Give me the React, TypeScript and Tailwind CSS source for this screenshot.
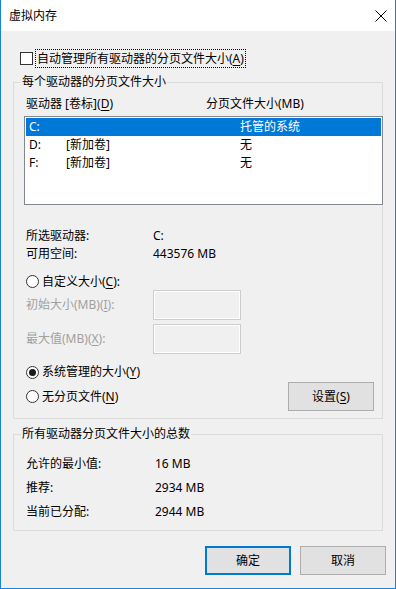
import type { ReactNode } from "react";

function Key({ k }: { k: string }) {
  return <span className="underline underline-offset-[2px]">{k}</span>;
}

function Radio({ checked }: { checked?: boolean }) {
  return (
    <span className="flex h-[13px] w-[13px] shrink-0 items-center justify-center rounded-full border border-[#333333] bg-white">
      {checked && <span className="h-[7px] w-[7px] rounded-full bg-[#1a1a1a]" />}
    </span>
  );
}

function Group({ title, className = "", children }: { title: string; className?: string; children: ReactNode }) {
  return (
    <div className={`relative mx-[12px] border border-[#dcdcdc] ${className}`}>
      <span className="absolute left-[7px] top-[-10px] bg-[#f0f0f0] px-[1px] leading-[18px]">{title}</span>
      {children}
    </div>
  );
}

function Button({ children, primary }: { children: ReactNode; primary?: boolean }) {
  return (
    <div
      className={`flex h-[29px] w-[86px] items-center justify-center bg-[#e1e1e1] ${
        primary ? "border-2 border-[#0078d7]" : "border border-[#adadad]"
      }`}
    >
      {children}
    </div>
  );
}

const drives = [
  { d: "C:", label: "", size: "托管的系统", selected: true },
  { d: "D:", label: "[新加卷]", size: "无" },
  { d: "F:", label: "[新加卷]", size: "无" },
];

export default function App() {
  return (
    <div className="flex h-[589px] w-[396px] flex-col border-x border-b border-[#1883d7] bg-[#f0f0f0] font-['Noto_Sans','Noto_Sans_CJK_SC',sans-serif] text-[12px] text-black">
      {/* title bar */}
      <div className="flex h-[31px] shrink-0 items-center justify-between bg-white pl-[8px] pr-[8px]">
        <span className="leading-[31px]">虚拟内存</span>
        <svg width="12" height="12" viewBox="0 0 12 12" className="text-black">
          <path d="M0.5 0.5 L11.5 11.5 M11.5 0.5 L0.5 11.5" stroke="currentColor" strokeWidth="1" />
        </svg>
      </div>

      <div className="flex flex-1 flex-col">
        <div className="ml-[19px] mt-[18px] flex h-[19px] items-center">
          <span className="h-[13px] w-[13px] border border-[#333333] bg-white" />
          <span className="ml-[2px] h-[19px] border border-dotted border-black px-[1px] leading-[17px]">
            自动管理所有驱动器的分页文件大小(<Key k="A" />)
          </span>
        </div>

        <Group title="每个驱动器的分页文件大小" className="mt-[14px] pb-[6px]">
          <div className="mt-[12px] flex h-[18px] pl-[12px] leading-[18px]">
            <span className="w-[180px]">
              驱动器 [卷标](<Key k="D" />)
            </span>
            <span>分页文件大小(MB)</span>
          </div>

          <div className="ml-[10px] mt-[3px] h-[89px] w-[359px] border border-[#828790] bg-white p-[1px]">
            {drives.map((r) => (
              <div
                key={r.d}
                className={`flex h-[18px] pl-[3px] leading-[18px] ${r.selected ? "bg-[#0078d7] text-white" : ""}`}
              >
                <span className="w-[37px]">{r.d}</span>
                <span className="w-[174px]">{r.label}</span>
                <span>{r.size}</span>
              </div>
            ))}
          </div>

          <div className="mt-[22px] flex h-[18px] pl-[12px] leading-[18px]">
            <span className="w-[127px]">所选驱动器:</span>
            <span>C:</span>
          </div>
          <div className="flex h-[18px] pl-[12px] leading-[18px]">
            <span className="w-[127px]">可用空间:</span>
            <span>443576 MB</span>
          </div>

          <div className="mt-[10px] flex h-[17px] items-center gap-[3px] pl-[12px]">
            <Radio />
            <span className="leading-[17px]">
              自定义大小(<Key k="C" />):
            </span>
          </div>

          <div className="flex h-[30px] items-center pl-[12px]">
            <span className="w-[127px] text-[#a0a0a0]">
              初始大小(MB)(<Key k="I" />):
            </span>
            <div className="h-[30px] w-[88px] border border-[#cccccc] bg-[#f0f0f0] shadow-[inset_0_0_0_1px_#ffffff]" />
          </div>
          <div className="mt-[4px] flex h-[30px] items-center pl-[12px]">
            <span className="w-[127px] text-[#a0a0a0]">
              最大值(MB)(<Key k="X" />):
            </span>
            <div className="h-[30px] w-[88px] border border-[#cccccc] bg-[#f0f0f0] shadow-[inset_0_0_0_1px_#ffffff]" />
          </div>

          <div className="mt-[9px] flex h-[18px] items-center gap-[3px] pl-[12px]">
            <Radio checked />
            <span className="leading-[18px]">
              系统管理的大小(<Key k="Y" />)
            </span>
          </div>

          <div className="flex h-[31px] items-center justify-between pl-[12px] pr-[8px]">
            <div className="flex items-center gap-[3px]">
              <Radio />
              <span className="leading-[18px]">
                无分页文件(<Key k="N" />)
              </span>
            </div>
            <Button>
              设置(<Key k="S" />)
            </Button>
          </div>
        </Group>

        <Group title="所有驱动器分页文件大小的总数" className="mt-[15px] pb-[6px] pt-[17px]">
          {[
            ["允许的最小值:", "16 MB"],
            ["推荐:", "2934 MB"],
            ["当前已分配:", "2944 MB"],
          ].map(([k, v]) => (
            <div key={k} className="flex h-[24px] items-center pl-[12px]">
              <span className="w-[129px]">{k}</span>
              <span>{v}</span>
            </div>
          ))}
        </Group>

        <div className="mt-[15px] flex justify-end gap-[9px] pr-[9px]">
          <Button primary>确定</Button>
          <Button>取消</Button>
        </div>
      </div>
    </div>
  );
}
